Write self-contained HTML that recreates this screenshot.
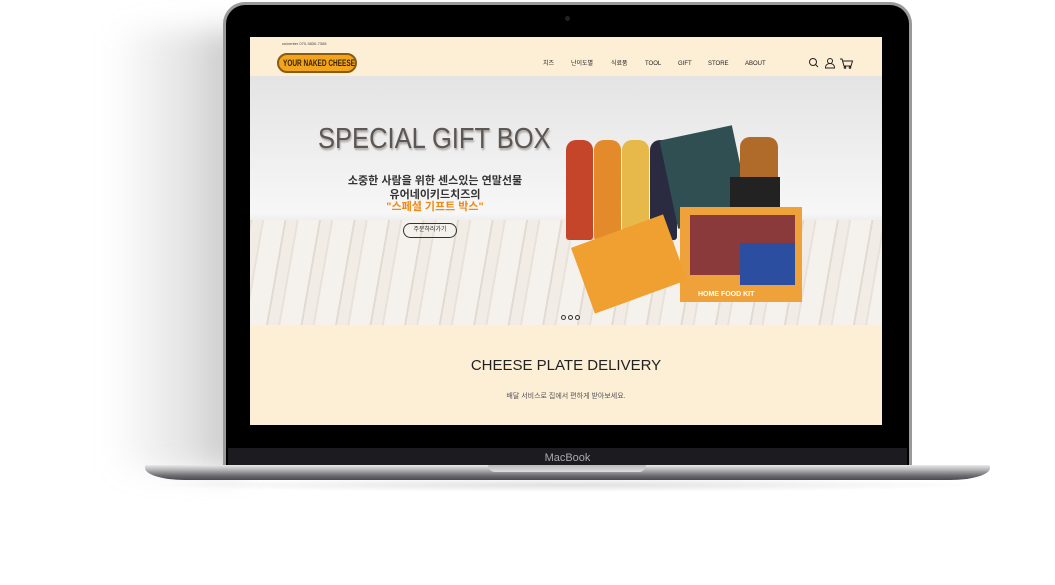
<!DOCTYPE html>
<html><head><meta charset="utf-8"><style>
*{margin:0;padding:0;box-sizing:border-box}
body{width:1055px;height:585px;background:#fff;position:relative;overflow:hidden;font-family:"Liberation Sans","Noto Sans CJK KR",sans-serif}
.shadow{position:absolute;left:110px;top:30px;width:130px;height:440px;background:linear-gradient(90deg,rgba(255,255,255,0),rgba(150,150,150,.3) 70%,rgba(110,110,110,.45));filter:blur(14px)}
.lid{position:absolute;left:223px;top:2px;width:689px;height:466px;background:#000;border-radius:22px 22px 0 0;border:3px solid #9a9a9c;border-bottom:none}
.chin{position:absolute;left:228px;top:448px;width:679px;height:20px;background:#1c1c20;color:#aaa;font-size:11px;text-align:center;line-height:20px}
.cam{position:absolute;left:565px;top:16px;width:5px;height:5px;border-radius:50%;background:#222}
.base{position:absolute;left:145px;top:465px;width:845px;height:15px;background:linear-gradient(#e9e9ea,#b8b8ba 30%,#6e6e72 70%,#4a4a4e);border-radius:2px 2px 40px 40px/2px 2px 12px 12px}
.notch{position:absolute;left:488px;top:465px;width:158px;height:7px;background:linear-gradient(#bbb,#ddd);border-radius:0 0 8px 8px}
.floorsh{position:absolute;left:150px;top:478px;width:835px;height:14px;background:radial-gradient(ellipse at center,rgba(0,0,0,.12),rgba(0,0,0,0) 70%)}
.screen{position:absolute;left:250px;top:37px;width:632px;height:388px;background:#fdeed6;overflow:hidden}
.cs{position:absolute;left:32px;top:4px;font-size:4px;color:#444;line-height:5px}
.logo{position:absolute;left:27px;top:16px;width:80px;height:20px;border:2px solid #8a5a10;border-radius:10px;background:#f2a51c;overflow:hidden}
.logo span{position:absolute;left:4px;top:0;color:#3a2200;font-weight:bold;font-size:9px;line-height:16px;white-space:nowrap;transform:scaleX(.72);transform-origin:left}
.nav{position:absolute;top:23px;font-size:6px;line-height:8px;height:8px;color:#222;white-space:nowrap}
.hero{position:absolute;left:0;top:39px;width:632px;height:249px;background:linear-gradient(#e4e4e4,#f7f7f7 55%,#eee 58%)}
.wood{position:absolute;left:0;top:144px;width:632px;height:105px;background:repeating-linear-gradient(100deg,#e3dbd2 0 2px,#f1ece6 2px 12px,#e9e2da 12px 14px,#f5f1ec 14px 34px)}
.title{position:absolute;left:68px;top:85px;font-size:29px;line-height:34px;color:#5e5651;text-shadow:1px 2px 2px rgba(0,0,0,.3);transform:scaleX(.88);transform-origin:left;white-space:nowrap}
.sub{position:absolute;left:60px;width:250px;text-align:center;font-size:11px;line-height:13px;color:#333;font-weight:bold}
.btn{position:absolute;left:153px;top:186px;width:54px;height:15px;border:1.5px solid #333;border-radius:8px;font-size:6px;text-align:center;line-height:12px;color:#333}
.dots{position:absolute;left:311px;top:270px}
.dots span{display:inline-block;width:5px;height:5px;border:1px solid #333;border-radius:50%;margin-right:2px}
.bottle{position:absolute;top:103px;width:27px;height:100px;border-radius:10px 10px 3px 3px}
.box{position:absolute}
</style></head><body>
<div class="shadow"></div>
<div class="floorsh"></div>
<div class="lid"></div>
<div class="cam"></div>
<div class="chin">MacBook</div>
<div class="base"></div>
<div class="notch"></div>
<div class="screen">
 <div class="cs">cs/center 070-3830-7308</div>
 <div class="logo"><span>YOUR NAKED CHEESE</span></div>
 <div class="nav" style="left:293px">치즈</div>
 <div class="nav" style="left:321px">난이도별</div>
 <div class="nav" style="left:361px">식료품</div>
 <div class="nav" style="left:395px">TOOL</div>
 <div class="nav" style="left:428px">GIFT</div>
 <div class="nav" style="left:458px">STORE</div>
 <div class="nav" style="left:495px">ABOUT</div>
 <svg style="position:absolute;left:558px;top:20px" width="48" height="12" viewBox="0 0 48 12" fill="none" stroke="#222" stroke-width="1"><circle cx="5" cy="5" r="3.5"/><path d="M7.5 7.5L10 10"/><circle cx="22" cy="4" r="2.5"/><path d="M17.5 11c0-3 2-4.5 4.5-4.5s4.5 1.5 4.5 4.5z"/><path d="M32 2h2l2 7h7l1.5-5H35"/><circle cx="37" cy="10.5" r=".8"/><circle cx="42" cy="10.5" r=".8"/></svg>
 <div class="hero"><div class="wood"></div></div>
 <div class="title">SPECIAL GIFT BOX</div>
 <div class="sub" style="top:138px">소중한 사람을 위한 센스있는 연말선물</div>
 <div class="sub" style="top:152px">유어네이키드치즈의</div>
 <div class="sub" style="top:164px;color:#f08a14">"스페셜 기프트 박스"</div>
 <div class="btn">주문하러가기</div>
 <div class="bottle" style="left:316px;background:#c5452a"></div>
 <div class="bottle" style="left:344px;background:#e38a2a"></div>
 <div class="bottle" style="left:372px;background:#e7b84a"></div>
 <div class="bottle" style="left:400px;background:#2a2a40"></div>
 <div class="box" style="left:418px;top:95px;width:74px;height:90px;background:#2f4f52;transform:rotate(-12deg)"></div>
 <div class="box" style="left:490px;top:100px;width:38px;height:110px;background:#b06a2a;border-radius:10px"></div>
 <div class="box" style="left:480px;top:140px;width:50px;height:60px;background:#222"></div>
 <div class="box" style="left:430px;top:170px;width:122px;height:95px;background:#f0a23a"></div>
 <div class="box" style="left:440px;top:178px;width:105px;height:60px;background:#8a3a3a"></div>
 <div class="box" style="left:490px;top:206px;width:55px;height:42px;background:#2b4ea0"></div>
 <div class="box" style="left:330px;top:192px;width:98px;height:70px;background:#f0a030;transform:rotate(-20deg)"></div>
 <div style="position:absolute;left:448px;top:254px;font-size:7px;color:#fff;font-weight:bold">HOME FOOD KIT</div>
 <div class="dots"><span></span><span></span><span></span></div>
 <div style="position:absolute;left:0;width:632px;top:320px;text-align:center;font-size:15px;color:#222">CHEESE PLATE DELIVERY</div>
 <div style="position:absolute;left:0;width:632px;top:354px;text-align:center;font-size:7px;color:#555">배달 서비스로 집에서 편하게 받아보세요.</div>
</div>
</body></html>
